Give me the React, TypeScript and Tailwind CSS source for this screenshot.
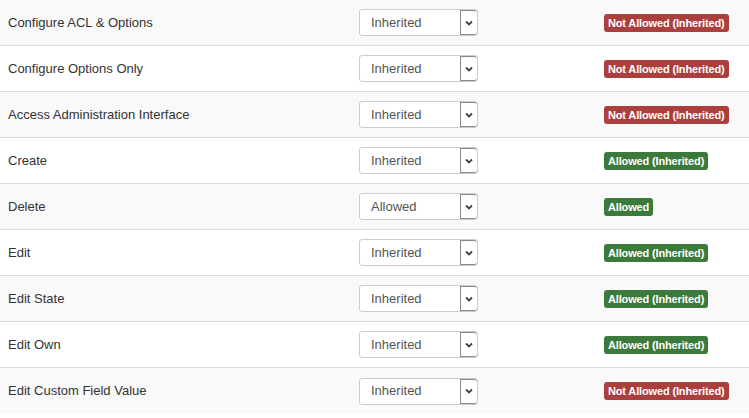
const rows = [
    { label: 'Configure ACL & Options', value: 'Inherited', status: 'Not Allowed (Inherited)', allowed: false },
    { label: 'Configure Options Only', value: 'Inherited', status: 'Not Allowed (Inherited)', allowed: false },
    { label: 'Access Administration Interface', value: 'Inherited', status: 'Not Allowed (Inherited)', allowed: false },
    { label: 'Create', value: 'Inherited', status: 'Allowed (Inherited)', allowed: true },
    { label: 'Delete', value: 'Allowed', status: 'Allowed', allowed: true },
    { label: 'Edit', value: 'Inherited', status: 'Allowed (Inherited)', allowed: true },
    { label: 'Edit State', value: 'Inherited', status: 'Allowed (Inherited)', allowed: true },
    { label: 'Edit Own', value: 'Inherited', status: 'Allowed (Inherited)', allowed: true },
    { label: 'Edit Custom Field Value', value: 'Inherited', status: 'Not Allowed (Inherited)', allowed: false },
];

function Select({ value }: { value: string }) {
    return (
        <div className="flex h-[27px] w-[119px] items-stretch rounded-[3px] border border-[#ccc] bg-white">
            <span className="flex flex-1 items-center pl-[11px] text-[13px] text-[#555]">{value}</span>
            <span className="flex w-[17px] items-center justify-center rounded-r-[3px] border border-r-0 border-[#888] bg-white">
                <svg width="8" height="6" viewBox="0 0 8 6">
                    <path d="M1 1.5 L4 4.5 L7 1.5" fill="none" stroke="#444" strokeWidth="1.8" />
                </svg>
            </span>
        </div>
    );
}

export default function App() {
    return (
        <div className="w-[749px] bg-white font-['Liberation_Sans',Arial,sans-serif] text-[13px] text-[#333]">
            {rows.map((row, i) => (
                <div
                    key={i}
                    className={`grid h-[46px] grid-cols-[351px_245px_1fr] items-center ${i % 2 === 0 ? 'bg-[#f9f9f9]' : 'bg-white'} ${i < rows.length - 1 ? 'border-b border-[#ddd]' : 'h-[45px]'}`}
                >
                    <div className="pl-2">{row.label}</div>
                    <div className="pl-2">
                        <Select value={row.value} />
                    </div>
                    <div className="pl-2">
                        <span
                            className={`inline-block rounded-[3px] px-1 text-[11px] font-bold leading-[18px] tracking-[-0.15px] text-white ${row.allowed ? 'bg-[#3b7a3a]' : 'bg-[#ab3f3e]'}`}
                        >
                            {row.status}
                        </span>
                    </div>
                </div>
            ))}
        </div>
    );
}
